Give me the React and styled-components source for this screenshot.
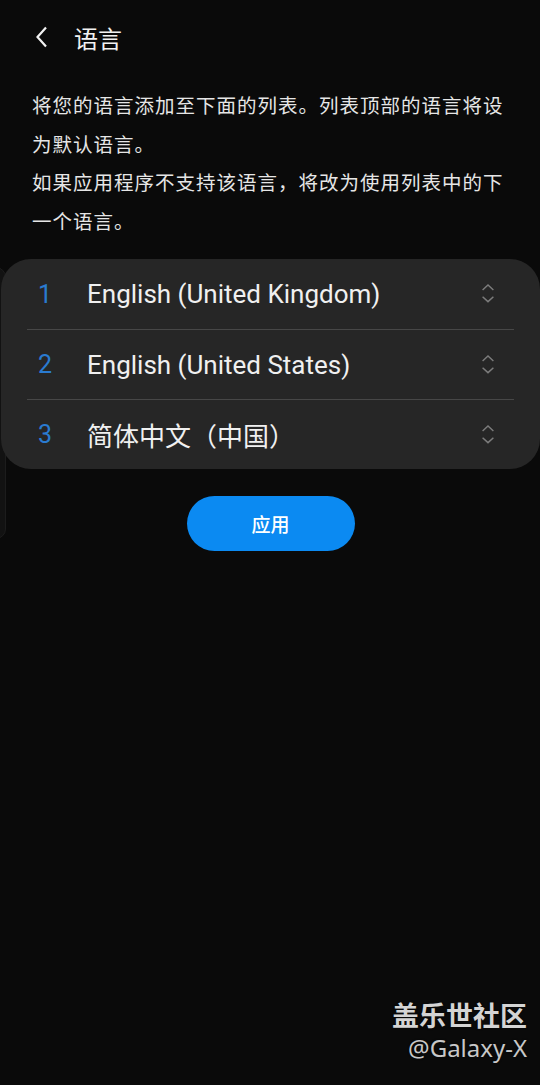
import React from "react";
import styled, { createGlobalStyle } from "styled-components";

const GlobalStyle = createGlobalStyle`
  html, body {
    margin: 0;
    padding: 0;
    background: #0a0a0a;
  }
  body {
    font-family: Roboto, "Noto Sans CJK SC", sans-serif;
  }
`;

const Page = styled.div`
  position: relative;
  width: 540px;
  min-height: 1085px;
  background: #0a0a0a;
  overflow: hidden;
`;

const Header = styled.header`
  display: flex;
  align-items: center;
  height: 74px;
  padding-left: 32px;
  gap: 22px;
`;

const BackButton = styled.button`
  display: flex;
  align-items: center;
  justify-content: center;
  width: 20px;
  height: 24px;
  padding: 0;
  border: 0;
  background: none;
  color: #f2f2f2;
`;

const Title = styled.h1`
  margin: 0;
  font-family: "Noto Sans CJK SC", sans-serif;
  font-size: 24px;
  font-weight: 400;
  color: #f2f2f2;
`;

const Description = styled.div`
  padding: 12px 28px 0 32px;
  width: 480px;
`;

const Para = styled.p`
  margin: 0;
  font-family: "Noto Sans CJK SC", sans-serif;
  font-size: 19.5px;
  letter-spacing: 1px;
  line-height: 38.5px;
  color: #e6e6e6;
`;

const ListArea = styled.div`
  position: relative;
  margin-top: 19px;
`;

// the list entry lying under the lifted card, only its edge shows
const BehindPanel = styled.div`
  position: absolute;
  left: -30px;
  top: 8px;
  width: 34px;
  height: 270px;
  border-radius: 10px;
  background: #121212;
  border: 1px solid #1c1c1c;
`;

const Card = styled.ul`
  position: relative;
  list-style: none;
  margin: 0 -2px 0 1px;
  padding: 0 26px;
  background: #262626;
  border-radius: 30px;
  width: 487px;
`;

const Row = styled.li`
  display: flex;
  align-items: center;
  box-sizing: border-box;
  height: 70px;
  border-top: ${(p) => (p.$first ? "none" : "1.5px solid #474747")};
`;

const Index = styled.span`
  width: 60px;
  padding-left: 11px;
  box-sizing: border-box;
  font-size: 25px;
  color: #2a7bd0;
`;

const Name = styled.span`
  flex: 1;
  font-family: Roboto, "Noto Sans CJK SC", sans-serif;
  font-size: 26px;
  color: #f0f0f0;
`;

const Handle = styled.span`
  display: flex;
  width: 18px;
  margin-right: 17px;
  color: #7c7c7c;
`;

const ButtonWrap = styled.div`
  display: flex;
  justify-content: center;
  padding-top: 27px;
  padding-left: 1px;
`;

const ApplyButton = styled.button`
  width: 168px;
  height: 55px;
  border: 0;
  border-radius: 28px;
  background: #0b8af2;
  color: #ffffff;
  font-family: "Noto Sans CJK SC", sans-serif;
  font-size: 19px;
  font-weight: 500;
`;

const Watermark = styled.div`
  position: absolute;
  right: 13px;
  top: 997px;
  display: flex;
  flex-direction: column;
  align-items: flex-end;
  color: #d4d4d4;
  text-shadow: 0 0 2px rgba(0, 0, 0, 0.6);
`;

const MarkTitle = styled.span`
  font-family: "Noto Sans CJK SC", sans-serif;
  font-size: 27px;
  font-weight: 700;
  line-height: 35px;
`;

const MarkHandle = styled.span`
  font-family: "Noto Sans", sans-serif;
  font-size: 24px;
  line-height: 32px;
  color: #c8c8c8;
`;

const languages = [
  "English (United Kingdom)",
  "English (United States)",
  "简体中文（中国）",
];

const Chevron = () => (
  <svg width="20" height="26" viewBox="0 0 20 26" fill="none" stroke="currentColor" strokeWidth="1.6">
    <polyline points="4,8.5 10,3 16,8.5" />
    <polyline points="4,16 10,21.5 16,16" />
  </svg>
);

export default function App() {
  return (
    <Page>
      <GlobalStyle />
      <Header>
        <BackButton>
          <svg width="14" height="22" viewBox="0 0 14 22" fill="none" stroke="currentColor" strokeWidth="2.2">
            <polyline points="11,1.5 2.5,11 11,20.5" />
          </svg>
        </BackButton>
        <Title>语言</Title>
      </Header>
      <Description>
        <Para>将您的语言添加至下面的列表。列表顶部的语言将设为默认语言。</Para>
        <Para>如果应用程序不支持该语言，将改为使用列表中的下一个语言。</Para>
      </Description>
      <ListArea>
        <BehindPanel />
        <Card>
          {languages.map((name, i) => (
            <Row key={name} $first={i === 0}>
              <Index>{i + 1}</Index>
              <Name>{name}</Name>
              <Handle>
                <Chevron />
              </Handle>
            </Row>
          ))}
        </Card>
      </ListArea>
      <ButtonWrap>
        <ApplyButton>应用</ApplyButton>
      </ButtonWrap>
      <Watermark>
        <MarkTitle>盖乐世社区</MarkTitle>
        <MarkHandle>@Galaxy-X</MarkHandle>
      </Watermark>
    </Page>
  );
}
